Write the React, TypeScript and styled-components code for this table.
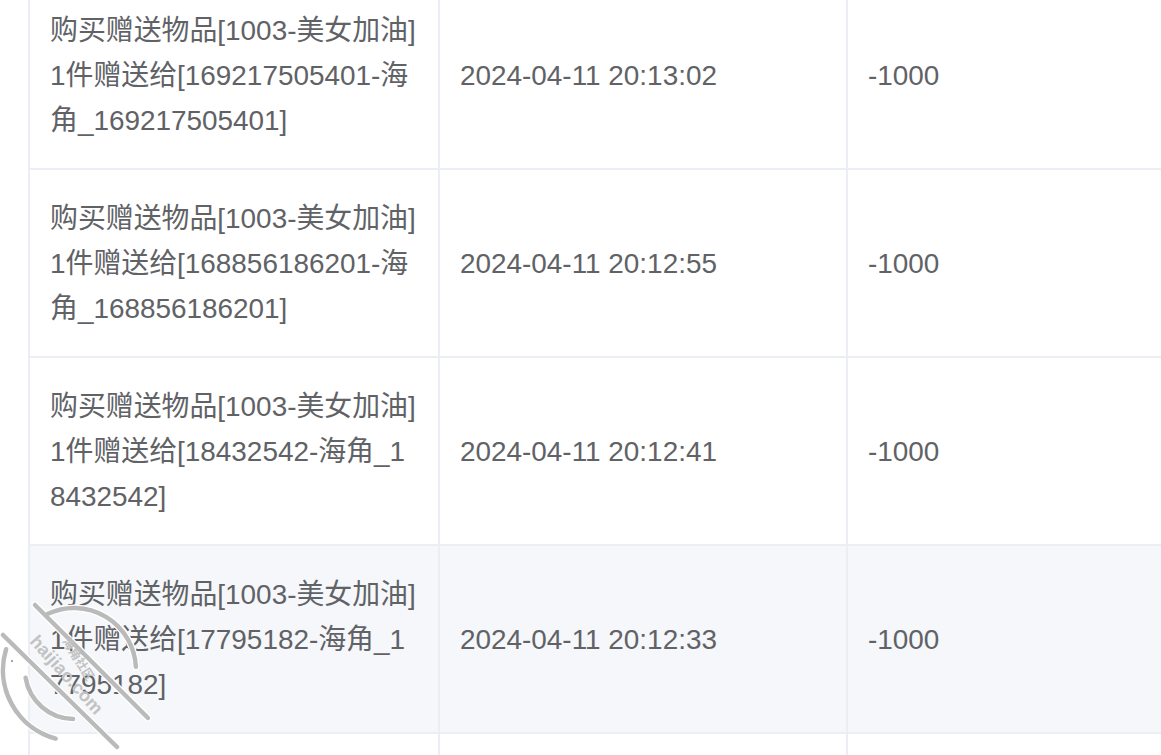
import styled, { createGlobalStyle } from "styled-components";

const GlobalStyle = createGlobalStyle`
  html, body {
    margin: 0;
    padding: 0;
    background: #ffffff;
    overflow: hidden;
  }
  body {
    font-family: "Liberation Sans", Arial, "Noto Sans CJK SC", sans-serif;
  }
`;

interface Record {
  desc: string;
  time: string;
  amount: string;
}

const records: Record[] = [
  {
    desc: "购买赠送物品[1003-美女加油]1件赠送给[169217505401-海角_169217505401]",
    time: "2024-04-11 20:13:02",
    amount: "-1000",
  },
  {
    desc: "购买赠送物品[1003-美女加油]1件赠送给[168856186201-海角_168856186201]",
    time: "2024-04-11 20:12:55",
    amount: "-1000",
  },
  {
    desc: "购买赠送物品[1003-美女加油]1件赠送给[18432542-海角_18432542]",
    time: "2024-04-11 20:12:41",
    amount: "-1000",
  },
  {
    desc: "购买赠送物品[1003-美女加油]1件赠送给[17795182-海角_17795182]",
    time: "2024-04-11 20:12:33",
    amount: "-1000",
  },
];

function pt(cx: number, cy: number, r: number, deg: number) {
  const a = (deg * Math.PI) / 180;
  return `${(cx + r * Math.cos(a)).toFixed(1)} ${(cy + r * Math.sin(a)).toFixed(1)}`;
}

function arc(cx: number, cy: number, r: number, from: number, to: number) {
  return `M ${pt(cx, cy, r, from)} A ${r} ${r} 0 0 1 ${pt(cx, cy, r, to)}`;
}

function Stamp() {
  const cx = 74;
  const cy = 80;
  const shapes = [
    arc(cx, cy, 49, 91, 171),
    arc(cx, cy, 62, -115, -3),
    arc(cx, cy, 71, 105, 197),
    "M 3 45 L 117 157",
    "M 35 15 L 148 128",
  ];
  return (
    <Watermark width="160" height="165" viewBox="0 0 160 165">
      {shapes.map((d, i) => (
        <path key={"h" + i} d={d} fill="none" stroke="#ffffff" strokeWidth="7" strokeLinecap="round" />
      ))}
      {shapes.map((d, i) => (
        <path key={"s" + i} d={d} fill="none" stroke="#bababa" strokeWidth="4.5" strokeLinecap="round" />
      ))}
      <text
        x="0"
        y="0"
        transform="translate(29 52) rotate(48)"
        fontFamily="'Liberation Sans', Arial, sans-serif"
        fontWeight="bold"
        fontSize="18"
        fill="#c2c2c2"
      >
        haijiao.com
      </text>
      <text
        x="0"
        y="0"
        transform="translate(62 51) rotate(58)"
        fontFamily="'Noto Sans CJK SC', sans-serif"
        fontWeight="bold"
        fontSize="12"
        fill="#c2c2c2"
      >
        海角社区
      </text>
      <circle cx="12" cy="71" r="0.8" fill="#333" />
    </Watermark>
  );
}

export default function App() {
  return (
    <>
      <GlobalStyle />
      <Page>
        <Table>
          {records.map((r, i) => (
            <Row key={i} $striped={i === 3}>
              <Cell>{r.desc}</Cell>
              <Cell>{r.time}</Cell>
              <Cell>{r.amount}</Cell>
            </Row>
          ))}
          {/* next record, scrolled below the fold */}
          <Row>
            <Cell />
            <Cell />
            <Cell />
          </Row>
        </Table>
        <Stamp />
      </Page>
    </>
  );
}

const Page = styled.div`
  position: relative;
  width: 1161px;
  height: 755px;
  overflow: hidden;
  padding-left: 28px;
  box-sizing: border-box;
`;

const Table = styled.div`
  width: 1230px;
  margin-top: -18px;
  border-left: 2px solid #ebeef5;
  color: #606266;
  font-size: 27.9px;
  line-height: 45px;
`;

const Row = styled.div<{ $striped?: boolean }>`
  display: grid;
  grid-template-columns: 410px 408px 408px;
  background: ${(p) => (p.$striped ? "#f5f7fa" : "#ffffff")};
`;

const Cell = styled.div`
  box-sizing: border-box;
  height: 188px;
  padding: 0 21px 0 20px;
  display: flex;
  align-items: center;
  border-right: 2px solid #ebeef5;
  border-bottom: 2px solid #ebeef5;
  word-break: break-all;
`;

const Watermark = styled.svg`
  position: absolute;
  left: 0;
  top: 590px;
  pointer-events: none;
`;
